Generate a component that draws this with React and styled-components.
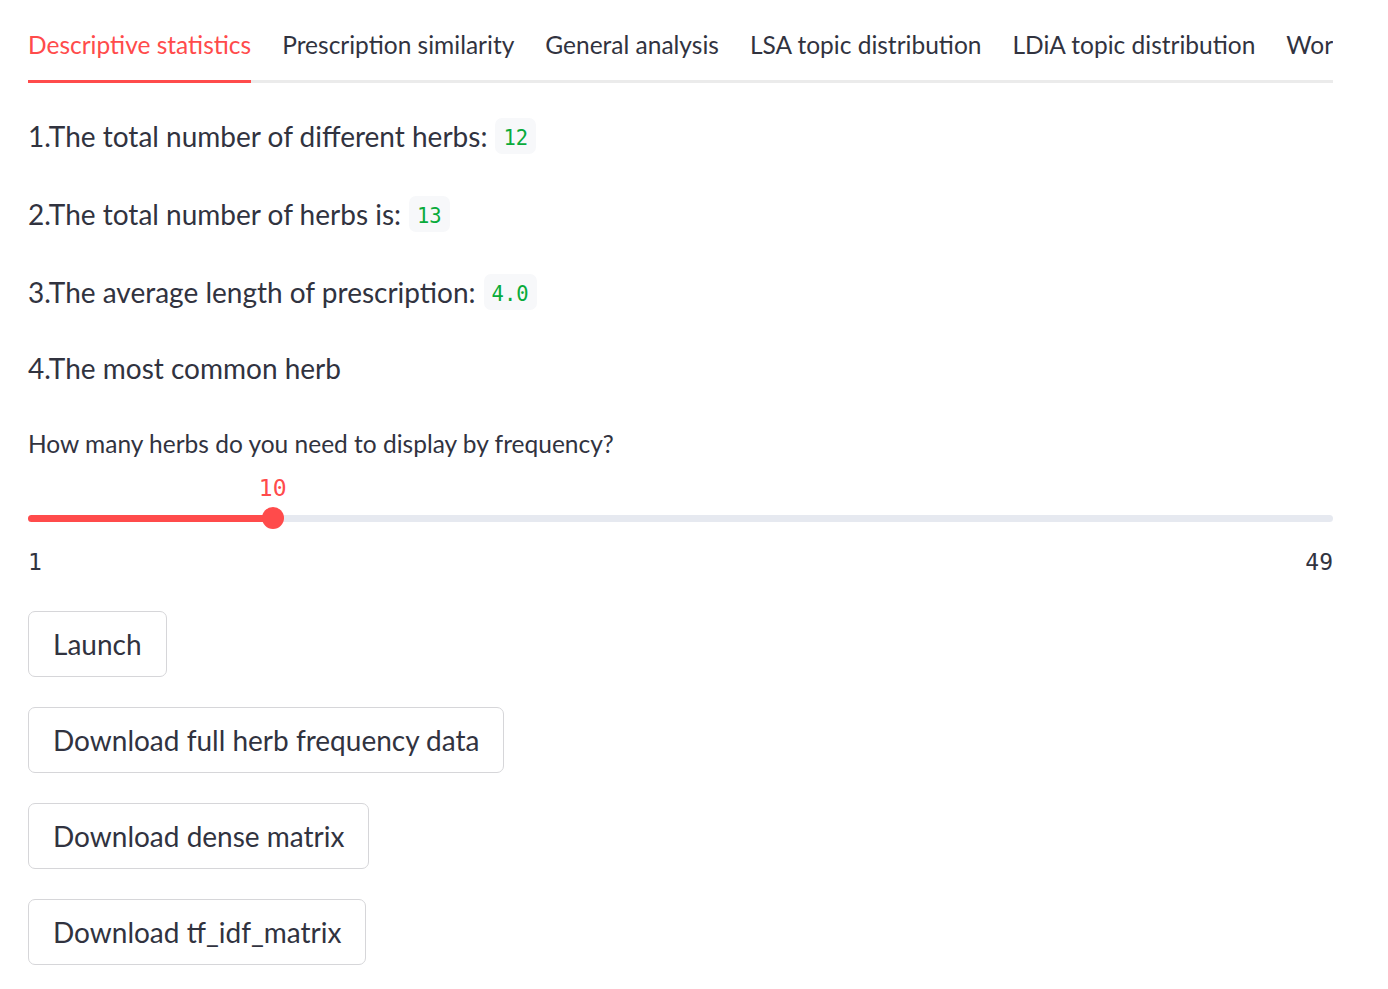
import styled, { createGlobalStyle } from "styled-components";

const GlobalStyle = createGlobalStyle`
  body {
    margin: 0;
    background: #ffffff;
    font-family: "Source Sans Pro", Lato, "Liberation Sans", sans-serif;
    color: #31333f;
  }
`;

const Page = styled.div`
  width: 1305px;
  padding-left: 28px;
  display: flex;
  flex-direction: column;
`;

const TabWrap = styled.div`
  height: 83px;
  overflow: hidden;
`;

const TabList = styled.div`
  height: 80px;
  display: flex;
  align-items: flex-start;
  gap: 31px;
  border-bottom: 3px solid #ebebeb;
  white-space: nowrap;
`;

const Tab = styled.div`
  display: flex;
  align-items: center;
  box-sizing: border-box;
  height: 83px;
  padding-top: 8px;
  font-size: 24.5px;
  color: ${(p) => (p.$active ? "#ff4b4b" : "#31333f")};
  border-bottom: 3px solid ${(p) => (p.$active ? "#ff4b4b" : "transparent")};
  flex-shrink: 0;
`;

const Body = styled.div`
  display: flex;
  flex-direction: column;
  gap: 42px;
  padding-top: 35px;
`;

const Line = styled.div`
  height: 36px;
  display: flex;
  align-items: center;
  gap: 8px;
  font-size: 28px;
  margin-top: ${(p) => p.$shift || 0}px;
`;

const Code = styled.code`
  font-family: "DejaVu Sans Mono", "Liberation Mono", monospace;
  font-size: 20.5px;
  color: #09ab3b;
  background: #f7f8fa;
  border-radius: 7px;
  height: 36px;
  padding: 3px 8px 0;
  display: flex;
  align-items: center;
  box-sizing: border-box;
`;

const Label = styled.div`
  font-size: 24.5px;
  height: 28px;
  line-height: 28px;
  margin-top: 2px;
`;

const Slider = styled.div`
  display: flex;
  flex-direction: column;
  margin-top: -26px;
`;

const ValueRow = styled.div`
  height: 28px;
  position: relative;
`;

const Value = styled.span`
  position: absolute;
  top: 0;
  transform: translateX(-50%);
  font-family: "DejaVu Sans Mono", "Liberation Mono", monospace;
  font-size: 23px;
  line-height: 28px;
  color: #ff4b4b;
`;

const TrackArea = styled.div`
  height: 32px;
  display: flex;
  align-items: center;
`;

const Track = styled.div`
  width: 100%;
  height: 7px;
  border-radius: 4px;
  background: #e6e9f0;
  position: relative;
`;

const Fill = styled.div`
  height: 100%;
  border-radius: 4px;
  background: #ff4b4b;
`;

const Thumb = styled.div`
  position: absolute;
  top: 50%;
  width: 22px;
  height: 22px;
  border-radius: 50%;
  background: #ff4b4b;
  transform: translate(-50%, -50%);
`;

const Ticks = styled.div`
  margin-top: 14px;
  height: 28px;
  display: flex;
  justify-content: space-between;
  align-items: center;
  font-family: "DejaVu Sans Mono", "Liberation Mono", monospace;
  font-size: 23px;
`;

const Buttons = styled.div`
  display: flex;
  flex-direction: column;
  align-items: flex-start;
  gap: 30px;
  margin-top: -7px;
  padding-bottom: 25px;
`;

const Button = styled.button`
  height: 66px;
  padding: 0 24px;
  font-family: inherit;
  font-size: 28px;
  color: #31333f;
  background: #ffffff;
  border: 1px solid #d6d6d9;
  border-radius: 7px;
  cursor: pointer;
`;

const tabs = [
  "Descriptive statistics",
  "Prescription similarity",
  "General analysis",
  "LSA topic distribution",
  "LDiA topic distribution",
  "Word cloud",
];

const stats = [
  { text: "1.The total number of different herbs:", value: "12" },
  { text: "2.The total number of herbs is:", value: "13" },
  { text: "3.The average length of prescription:", value: "4.0" },
  { text: "4.The most common herb", shift: -2 },
];

const min = 1;
const max = 49;
const current = 10;

const App = () => {
  const pct = ((current - min) / (max - min)) * 100;
  return (
    <>
      <GlobalStyle />
      <Page>
        <TabWrap>
          <TabList>
            {tabs.map((t, i) => (
              <Tab key={t} $active={i === 0}>
                {t}
              </Tab>
            ))}
          </TabList>
        </TabWrap>
        <Body>
          {stats.map((s) => (
            <Line key={s.text} $shift={s.shift}>
              {s.text}
              {s.value && <Code>{s.value}</Code>}
            </Line>
          ))}
          <Label>How many herbs do you need to display by frequency?</Label>
          <Slider>
            <ValueRow>
              <Value style={{ left: `${pct}%` }}>{current}</Value>
            </ValueRow>
            <TrackArea>
              <Track>
                <Fill style={{ width: `${pct}%` }} />
                <Thumb style={{ left: `${pct}%` }} />
              </Track>
            </TrackArea>
            <Ticks>
              <span>{min}</span>
              <span>{max}</span>
            </Ticks>
          </Slider>
          <Buttons>
            <Button>Launch</Button>
            <Button>Download full herb frequency data</Button>
            <Button>Download dense matrix</Button>
            <Button>Download tf_idf_matrix</Button>
          </Buttons>
        </Body>
      </Page>
    </>
  );
};

export default App;
